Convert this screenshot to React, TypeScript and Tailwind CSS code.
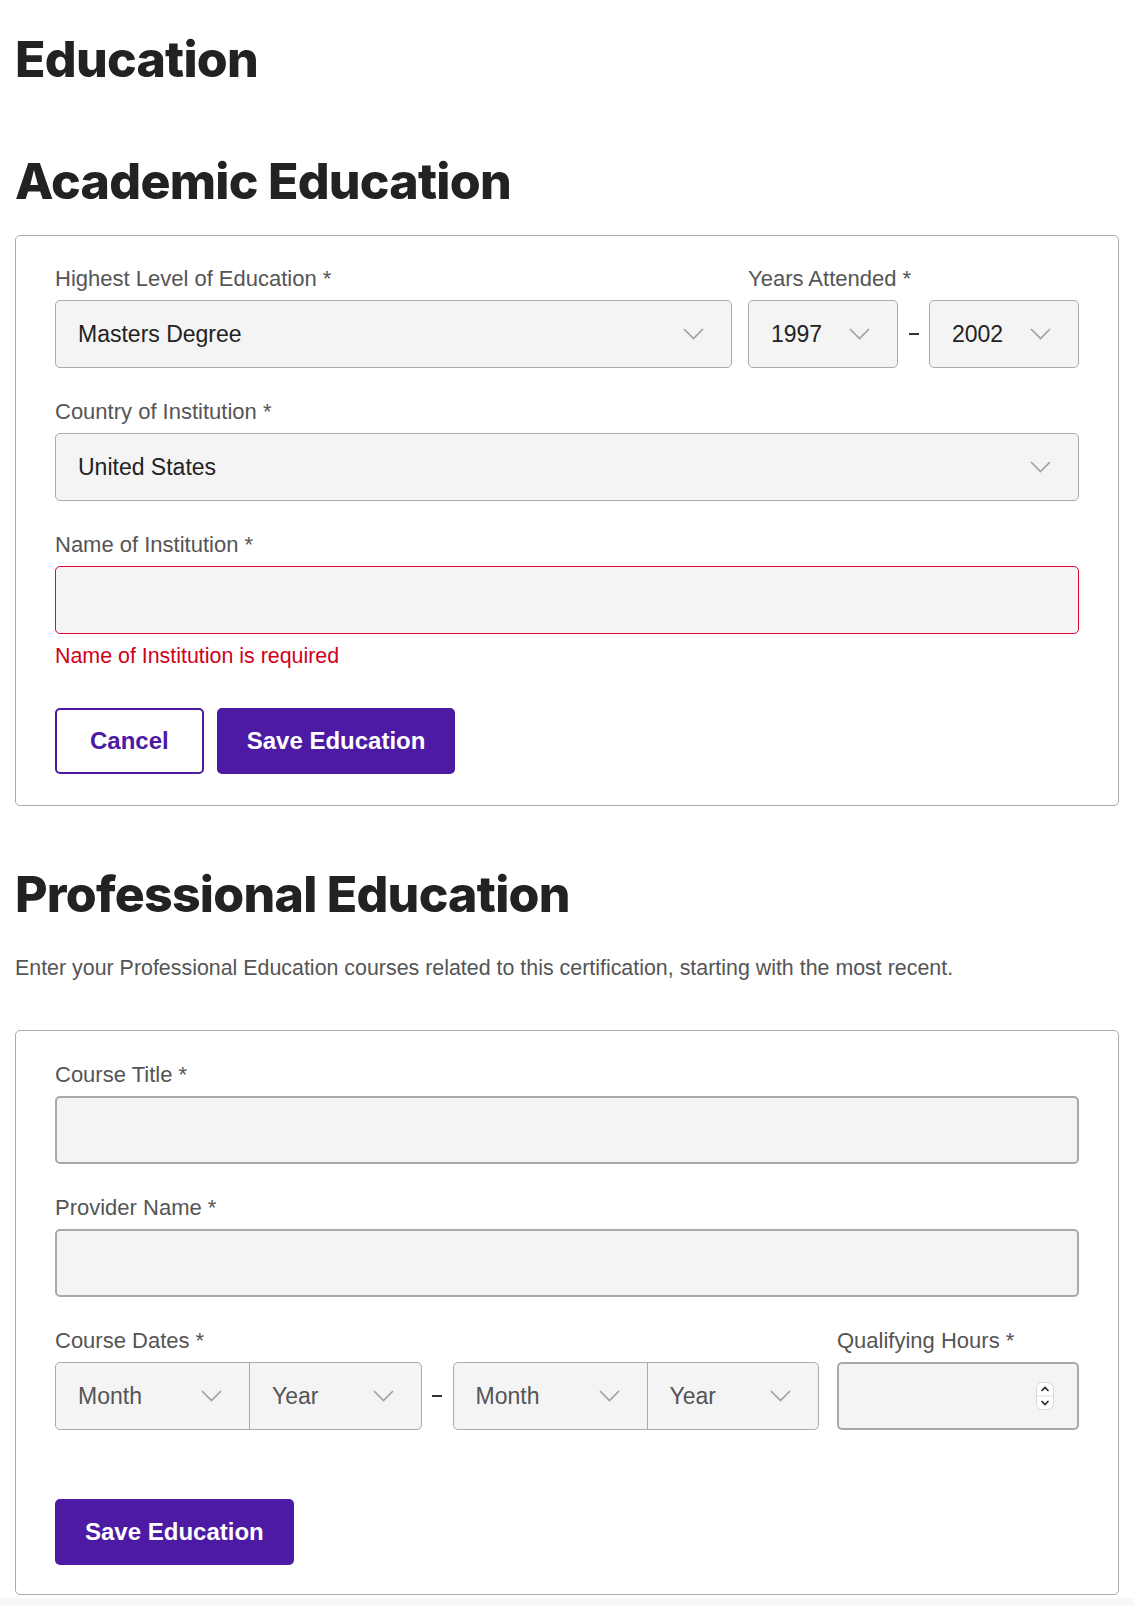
import React from 'react';

const sans = { fontFamily: '"Liberation Sans", Arial, sans-serif' };
const head = { fontFamily: 'Inter, "Liberation Sans", sans-serif' };

const labelCls = 'block text-[22px] leading-[26px] text-[#555] mb-[8px]';
const headCls = 'text-[50px] leading-[60px] font-extrabold text-[#222] tracking-[-0.015em]';

function Chevron() {
  return (
    <svg width="21" height="12" viewBox="0 0 21 12" fill="none" className="shrink-0">
      <path d="M1 1L10.5 10.5L20 1" stroke="#a0a0a0" strokeWidth="1.6" />
    </svg>
  );
}

function Spinner() {
  return (
    <svg width="18" height="28" viewBox="0 0 18 28" fill="none" className="shrink-0">
      <rect x="0.5" y="0.5" width="17" height="27" rx="6" fill="#fff" stroke="#d8d8d8" />
      <line x1="1" y1="14" x2="17" y2="14" stroke="#e2e2e2" />
      <path d="M5.5 9L9 5.5L12.5 9" stroke="#222" strokeWidth="1.6" />
      <path d="M5.5 19L9 22.5L12.5 19" stroke="#222" strokeWidth="1.6" />
    </svg>
  );
}

function SelectBox({ value, className = '' }: { value: string; className?: string }) {
  return (
    <div
      className={`flex items-center justify-between h-[68px] pl-[22px] pr-[27px] bg-[#f4f4f4] border border-[#aaa] rounded-[5px] text-[23px] text-[#222] ${className}`}
    >
      <span>{value}</span>
      <Chevron />
    </div>
  );
}

function DashSep() {
  return (
    <div className="w-[31px] shrink-0 flex items-center justify-center">
      <div className="w-[10px] h-[1.5px] bg-[#333]" />
    </div>
  );
}

function DatePair() {
  return (
    <div className="flex-1 flex h-[68px] bg-[#f4f4f4] border border-[#aaa] rounded-[5px] text-[23px] text-[#555]">
      <div className="w-[194px] flex items-center justify-between pl-[22px] pr-[27px] border-r border-[#aaa]">
        <span>Month</span>
        <Chevron />
      </div>
      <div className="flex-1 flex items-center justify-between pl-[22px] pr-[27px]">
        <span>Year</span>
        <Chevron />
      </div>
    </div>
  );
}

export default function App() {
  return (
    <div className="bg-white min-h-screen" style={sans}>
      <div className="px-[15px] pt-[29px]">
        <h1 className={headCls} style={head}>
          Education
        </h1>

        <h2 className={`mt-[62px] ${headCls}`} style={head}>
          Academic Education
        </h2>

        {/* Academic card */}
        <div className="mt-[24px] border border-[#aaa] rounded-[5px] px-[39px] pt-[30px] pb-[31px]">
          <div className="flex gap-[16px]">
            <div className="flex-1">
              <label className={labelCls}>Highest Level of Education *</label>
              <SelectBox value="Masters Degree" />
            </div>
            <div className="w-[331px]">
              <label className={labelCls}>Years Attended *</label>
              <div className="flex">
                <SelectBox value="1997" className="flex-1" />
                <DashSep />
                <SelectBox value="2002" className="flex-1" />
              </div>
            </div>
          </div>

          <div className="mt-[31px]">
            <label className={labelCls}>Country of Institution *</label>
            <SelectBox value="United States" />
          </div>

          <div className="mt-[31px]">
            <label className={labelCls}>Name of Institution *</label>
            <div className="h-[68px] bg-[#f4f4f4] border-[1.5px] border-[#e1062c] rounded-[5px]" />
            <p className="mt-[9px] text-[21.4px] leading-[26px] text-[#d0021b]">Name of Institution is required</p>
          </div>

          <div className="mt-[39px] flex gap-[13px]">
            <button className="h-[66px] px-[33px] border-2 border-[#4c1aa3] rounded-[5px] bg-white text-[24px] font-bold text-[#4c1aa3]">
              Cancel
            </button>
            <button className="h-[66px] px-[30px] rounded-[5px] bg-[#4c1aa3] text-[24px] font-bold text-white">
              Save Education
            </button>
          </div>
        </div>

        <h2 className={`mt-[58px] ${headCls}`} style={head}>
          Professional Education
        </h2>

        <p className="mt-[30px] text-[21.4px] leading-[28px] text-[#555]">
          Enter your Professional Education courses related to this certification, starting with the most recent.
        </p>

        {/* Professional card */}
        <div className="mt-[48px] border border-[#aaa] rounded-[5px] px-[39px] pt-[31px] pb-[29px]">
          <div>
            <label className={labelCls}>Course Title *</label>
            <div className="h-[68px] bg-[#f4f4f4] border-2 border-[#a9a9a9] rounded-[5px]" />
          </div>

          <div className="mt-[31px]">
            <label className={labelCls}>Provider Name *</label>
            <div className="h-[68px] bg-[#f4f4f4] border-2 border-[#a9a9a9] rounded-[5px]" />
          </div>

          <div className="mt-[31px] flex gap-[18px]">
            <div className="flex-1">
              <label className={labelCls}>Course Dates *</label>
              <div className="flex">
                <DatePair />
                <DashSep />
                <DatePair />
              </div>
            </div>
            <div className="w-[242px]">
              <label className={labelCls}>Qualifying Hours *</label>
              <div className="h-[68px] bg-[#f4f4f4] border-2 border-[#a9a9a9] rounded-[5px] flex items-center justify-end pr-[23px]">
                <Spinner />
              </div>
            </div>
          </div>

          <div className="mt-[69px]">
            <button className="h-[66px] px-[30px] rounded-[5px] bg-[#4c1aa3] text-[24px] font-bold text-white">
              Save Education
            </button>
          </div>
        </div>
      </div>
      <div className="mt-[3px] h-[40px] bg-[#f7f7f7]" />
    </div>
  );
}
